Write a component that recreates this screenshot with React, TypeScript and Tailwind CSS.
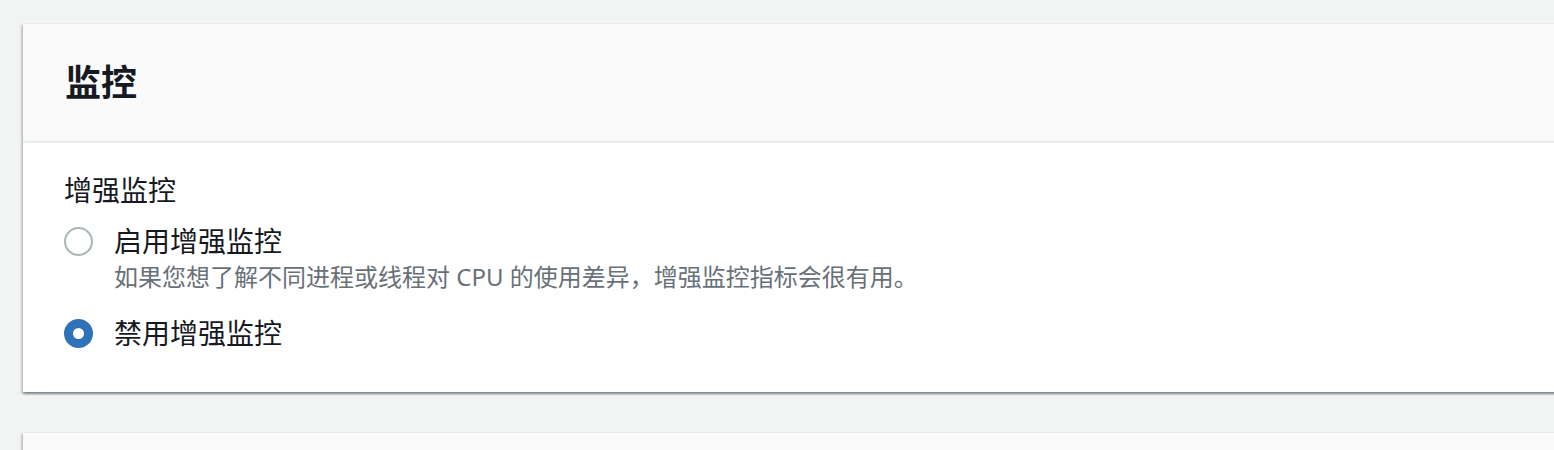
import { useState } from 'react';

const cardShadow =
  'shadow-[0_2px_2px_0_rgba(0,28,36,0.3),2px_2px_2px_0_rgba(0,28,36,0.15),-2px_2px_2px_0_rgba(0,28,36,0.15)]';

interface RadioProps {
  checked: boolean;
  label: string;
  description?: string;
  onSelect: () => void;
}

function Radio({ checked, label, description, onSelect }: RadioProps) {
  return (
    <label className="flex cursor-pointer items-start gap-[21px]" onClick={onSelect}>
      <span className="flex h-10 w-[29px] shrink-0 items-center justify-center">
        {checked ? (
          <span className="h-[29px] w-[29px] rounded-full border-[9px] border-[#2f72b8] bg-white" />
        ) : (
          <span className="h-[29px] w-[29px] rounded-full border-2 border-[#aab7b8] bg-white" />
        )}
      </span>
      <span className="flex flex-col">
        <span className="text-[28px] leading-10 text-[#16191f]">{label}</span>
        {description && (
          <span className="text-[24px] leading-8 text-[#687078]">{description}</span>
        )}
      </span>
    </label>
  );
}

export default function App() {
  const [enhanced, setEnhanced] = useState(false);

  return (
    <div
      className="h-[450px] overflow-hidden bg-[#f2f3f3] pt-[23px] pl-[23px]"
      style={{ fontFamily: '"Noto Sans", "Noto Sans CJK SC", sans-serif' }}
    >
      {/* Monitoring card */}
      <div className={`w-[1560px] border-t border-[#eaeded] bg-white ${cardShadow}`}>
        <div className="flex h-[119px] items-center border-b-2 border-[#eaeded] bg-[#fafafa] px-[42px]">
          <h2 className="text-[36px] font-bold text-[#16191f]">监控</h2>
        </div>
        <div className="flex flex-col px-[41px] pt-[27px] pb-[39px]">
          <div className="text-[28px] leading-10 text-[#16191f]">增强监控</div>
          <div className="mt-[11px] flex flex-col gap-5">
            <Radio
              checked={enhanced}
              label="启用增强监控"
              description="如果您想了解不同进程或线程对 CPU 的使用差异，增强监控指标会很有用。"
              onSelect={() => setEnhanced(true)}
            />
            <Radio checked={!enhanced} label="禁用增强监控" onSelect={() => setEnhanced(false)} />
          </div>
        </div>
      </div>

      {/* Next card (cut off) */}
      <div className={`mt-10 h-[100px] w-[1560px] border-t border-[#eaeded] bg-[#fafafa] ${cardShadow}`} />
    </div>
  );
}
